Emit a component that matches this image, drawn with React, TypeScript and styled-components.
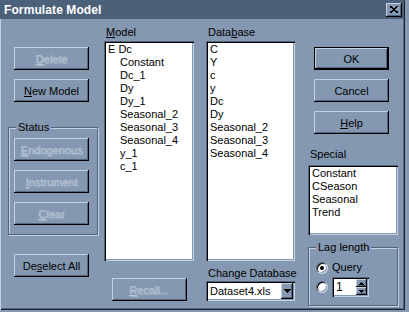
import React from "react";
import styled, { createGlobalStyle } from "styled-components";

const face = "#8498b1";
const light = "#c5d1de";
const shadow = "#54667c";
const dark = "#000";

const GlobalStyle = createGlobalStyle`
  html, body {
    margin: 0;
    padding: 0;
    background: ${face};
  }
  body {
    font-family: "Liberation Sans", Arial, sans-serif;
    font-size: 11px;
    color: #000;
  }
`;

const Window = styled.div`
  width: 405px;
  height: 310px;
  background: ${face};
  box-shadow: inset 1px 0 ${light}, inset -1px -1px #1c2430,
    inset -2px -2px ${shadow};
  display: flex;
  flex-direction: column;
`;

const TitleBar = styled.div`
  height: 19px;
  margin-right: 1px;
  padding: 0 2px 0 4px;
  background: #4b6079;
  display: flex;
  align-items: center;
  justify-content: space-between;
`;

const Title = styled.span`
  color: #fff;
  font-weight: bold;
  font-size: 12px;
  letter-spacing: 0.1px;
`;

const CloseButton = styled.div`
  width: 16px;
  height: 14px;
  background: ${face};
  box-shadow: inset -1px -1px ${dark}, inset 1px 1px ${light},
    inset -2px -2px ${shadow};
  display: flex;
  align-items: center;
  justify-content: center;
`;

const Body = styled.div`
  display: flex;
  padding-left: 8px;
`;

const Column = styled.div<{ $width: number; $gap?: number; $top?: number }>`
  width: ${(p) => p.$width}px;
  margin-left: ${(p) => p.$gap ?? 0}px;
  padding-top: ${(p) => p.$top ?? 0}px;
  display: flex;
  flex-direction: column;
`;

const ButtonStack = styled.div<{ $top?: number }>`
  display: flex;
  flex-direction: column;
  gap: 9px;
  padding-left: 6px;
  margin-top: ${(p) => p.$top ?? 0}px;
`;

const Button = styled.button<{ $default?: boolean }>`
  width: 75px;
  height: 23px;
  padding: 0;
  border: none;
  background: ${face};
  font-family: "Liberation Sans", Arial, sans-serif;
  font-size: 11px;
  color: ${dark};
  box-shadow: ${(p) =>
    p.$default
      ? `inset 0 0 0 1px ${dark}, inset -2px -2px ${dark}, inset 2px 2px ${light}, inset -3px -3px ${shadow}`
      : `inset -1px -1px ${dark}, inset 1px 1px ${light}, inset -2px -2px ${shadow}`};
  &:disabled {
    color: #b9c6d5;
    text-shadow: 1px 1px 0 rgba(220, 228, 238, 0.35);
  }
  u {
    text-decoration-thickness: 1px;
    text-underline-offset: 1px;
  }
`;

const CenterButton = styled(Button)`
  align-self: center;
`;

const Label = styled.div<{ $top?: number }>`
  line-height: 13px;
  padding-left: 2px;
  margin-top: ${(p) => p.$top ?? 0}px;
  white-space: nowrap;
  u {
    text-underline-offset: 1px;
  }
`;

const ListBox = styled.div<{ $height: number; $top?: number }>`
  height: ${(p) => p.$height}px;
  margin-top: ${(p) => p.$top ?? 0}px;
  background: #fff;
  box-shadow: inset 1px 1px ${shadow}, inset 2px 2px ${dark},
    inset -1px -1px ${light}, inset -2px -2px ${face};
  padding: 2px 2px 2px 4px;
  box-sizing: border-box;
  overflow: hidden;
`;

const ListItem = styled.div<{ $indent?: number }>`
  line-height: 13px;
  padding-left: ${(p) => p.$indent ?? 0}px;
  white-space: nowrap;
`;

const Group = styled.div<{ $top: number }>`
  margin-top: ${(p) => p.$top}px;
  border: 1px solid ${shadow};
  box-shadow: inset 1px 1px ${light}, 1px 1px ${light};
  display: flex;
  flex-direction: column;
`;

const GroupLabel = styled.div`
  align-self: flex-start;
  margin: -7px 0 0 7px;
  padding: 0 2px;
  line-height: 13px;
  background: ${face};
`;

const StatusButtons = styled.div`
  display: flex;
  flex-direction: column;
  gap: 9px;
  padding: 4px 0 9px 5px;
`;

const Dropdown = styled.div`
  height: 20px;
  margin-top: 1px;
  box-sizing: border-box;
  padding: 2px;
  background: #fff;
  box-shadow: inset 1px 1px ${shadow}, inset 2px 2px ${dark},
    inset -1px -1px ${light}, inset -2px -2px ${face};
  display: flex;
  align-items: center;
`;

const DropdownText = styled.span`
  flex: 1;
  padding-left: 2px;
`;

const ArrowButton = styled.div<{ $w: number; $h: number }>`
  width: ${(p) => p.$w}px;
  height: ${(p) => p.$h}px;
  flex: none;
  background: ${face};
  box-shadow: inset -1px -1px ${dark}, inset 1px 1px ${light},
    inset -2px -2px ${shadow};
  display: flex;
  align-items: center;
  justify-content: center;
`;

const LagRows = styled.div`
  display: flex;
  flex-direction: column;
  padding: 0 0 8px 7px;
`;

const RadioRow = styled.div<{ $top: number }>`
  display: flex;
  align-items: center;
  gap: 4px;
  margin-top: ${(p) => p.$top}px;
  line-height: 13px;
`;

const Radio = styled.span<{ $checked?: boolean }>`
  width: 12px;
  height: 12px;
  flex: none;
  box-sizing: border-box;
  border-radius: 50%;
  background: #fff;
  border: 1px solid;
  border-color: ${shadow} ${light} ${light} ${shadow};
  box-shadow: inset 1px 1px ${dark}, inset -1px -1px ${face};
  display: flex;
  align-items: center;
  justify-content: center;
  &::after {
    content: "";
    width: 4px;
    height: 4px;
    border-radius: 50%;
    background: ${(p) => (p.$checked ? dark : "transparent")};
  }
`;

const Spinner = styled.div`
  width: 37px;
  height: 20px;
  box-sizing: border-box;
  padding: 2px;
  background: #fff;
  box-shadow: inset 1px 1px ${shadow}, inset 2px 2px ${dark},
    inset -1px -1px ${light}, inset -2px -2px ${face};
  display: flex;
`;

const SpinValue = styled.span`
  flex: 1;
  padding-left: 2px;
  line-height: 16px;
  font-size: 12px;
`;

const SpinButtons = styled.div`
  display: flex;
  flex-direction: column;
`;

const Triangle = ({ up, w = 7 }: { up?: boolean; w?: number }) => {
  const h = Math.ceil(w / 2);
  return (
    <svg width={w} height={h} viewBox={`0 0 ${w} ${h}`} shapeRendering="crispEdges">
      <polygon
        points={up ? `0,${h} ${w},${h} ${w / 2},0` : `0,0 ${w},0 ${w / 2},${h}`}
        fill="#000"
      />
    </svg>
  );
};

const modelItems = [
  "Constant",
  "Dc_1",
  "Dy",
  "Dy_1",
  "Seasonal_2",
  "Seasonal_3",
  "Seasonal_4",
  "y_1",
  "c_1",
];
const databaseItems = ["C", "Y", "c", "y", "Dc", "Dy", "Seasonal_2", "Seasonal_3", "Seasonal_4"];
const specialItems = ["Constant", "CSeason", "Seasonal", "Trend"];

export default function App() {
  return (
    <>
      <GlobalStyle />
      <Window>
        <TitleBar>
          <Title>Formulate Model</Title>
          <CloseButton>
            <svg width="8" height="7" viewBox="0 0 8 7" shapeRendering="crispEdges">
              <path d="M0 0 L8 7 M8 0 L0 7" stroke="#000" strokeWidth="1.6" />
            </svg>
          </CloseButton>
        </TitleBar>
        <Body>
          <Column $width={90} $top={28}>
            <ButtonStack>
              <Button disabled>
                <u>D</u>elete
              </Button>
              <Button>
                <u>N</u>ew Model
              </Button>
            </ButtonStack>
            <Group $top={25}>
              <GroupLabel>Status</GroupLabel>
              <StatusButtons>
                <Button disabled>
                  <u>E</u>ndogenous
                </Button>
                <Button disabled>
                  <u>I</u>nstrument
                </Button>
                <Button disabled>
                  <u>C</u>lear
                </Button>
              </StatusButtons>
            </Group>
            <ButtonStack $top={19}>
              <Button>
                De<u>s</u>elect All
              </Button>
            </ButtonStack>
          </Column>

          <Column $width={90} $gap={6} $top={7}>
            <Label>
              <u>M</u>odel
            </Label>
            <ListBox $height={220} $top={2}>
              <ListItem>E Dc</ListItem>
              {modelItems.map((m) => (
                <ListItem key={m} $indent={12}>
                  {m}
                </ListItem>
              ))}
            </ListBox>
            <CenterButton disabled style={{ marginTop: 17 }}>
              <u>R</u>ecall...
            </CenterButton>
          </Column>

          <Column $width={89} $gap={12} $top={7}>
            <Label>
              Data<u>b</u>ase
            </Label>
            <ListBox $height={220} $top={2}>
              {databaseItems.map((d) => (
                <ListItem key={d}>{d}</ListItem>
              ))}
            </ListBox>
            <Label $top={6}>Change Database</Label>
            <Dropdown>
              <DropdownText>Dataset4.xls</DropdownText>
              <ArrowButton $w={12} $h={16}>
                <Triangle w={7} />
              </ArrowButton>
            </Dropdown>
          </Column>

          <Column $width={90} $gap={13} $top={28}>
            <ButtonStack>
              <Button $default>OK</Button>
              <Button>Cancel</Button>
              <Button>
                <u>H</u>elp
              </Button>
            </ButtonStack>
            <Label $top={14}>Special</Label>
            <ListBox $height={70} $top={4}>
              {specialItems.map((s) => (
                <ListItem key={s}>{s}</ListItem>
              ))}
            </ListBox>
            <Group $top={12}>
              <GroupLabel>Lag length</GroupLabel>
              <LagRows>
                <RadioRow $top={7}>
                  <Radio $checked />
                  <span>Query</span>
                </RadioRow>
                <RadioRow $top={3}>
                  <Radio />
                  <Spinner>
                    <SpinValue>1</SpinValue>
                    <SpinButtons>
                      <ArrowButton $w={11} $h={8}>
                        <Triangle up w={5} />
                      </ArrowButton>
                      <ArrowButton $w={11} $h={8}>
                        <Triangle w={5} />
                      </ArrowButton>
                    </SpinButtons>
                  </Spinner>
                </RadioRow>
              </LagRows>
            </Group>
          </Column>
        </Body>
      </Window>
    </>
  );
}
